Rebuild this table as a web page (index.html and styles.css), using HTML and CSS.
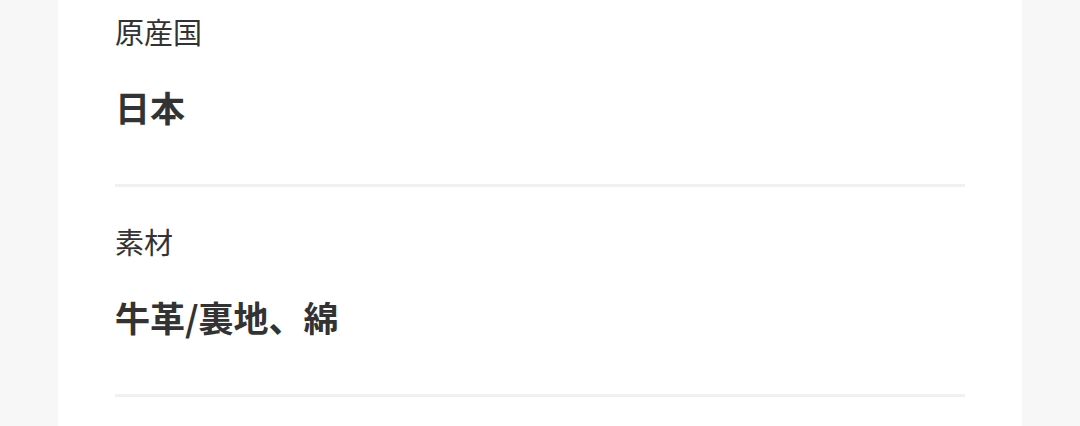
FILE: index.html
```html
<!DOCTYPE html>
<html lang="ja">
<head>
    <meta charset="UTF-8">
    <meta name="viewport" content="width=device-width, initial-scale=1.0">
    <title>商品詳細</title>
    <link rel="stylesheet" href="styles.css">
</head>
<body>
    <div class="page">
        <div class="card">
            <div class="spec-list">
                <div class="spec-item">
                    <div class="spec-label">原産国</div>
                    <div class="spec-value">日本</div>
                </div>
                <div class="spec-item">
                    <div class="spec-label">素材</div>
                    <div class="spec-value">牛革/裏地、綿</div>
                </div>
            </div>
        </div>
    </div>
</body>
</html>
```

FILE: styles.css
```css
body {
    margin: 0;
    padding: 0;
    background-color: #f7f7f7;
    font-family: 'Noto Sans CJK JP', 'Noto Sans', sans-serif;
    color: #333;
    height: 426px;
    overflow: hidden;
}
.page {
    padding: 0 58px;
}
.card {
    background-color: #fff;
    padding: 0 57px;
    min-height: 480px;
}
.spec-list {
    margin-top: -23px;
}
.spec-item {
    display: flex;
    flex-direction: column;
    gap: 32px;
    padding: 34px 0 53px;
    border-bottom: 3px solid #f0f0f0;
}
.spec-label {
    font-size: 29px;
    line-height: 40px;
}
.spec-value {
    font-size: 35px;
    line-height: 48px;
    font-weight: bold;
}
```
